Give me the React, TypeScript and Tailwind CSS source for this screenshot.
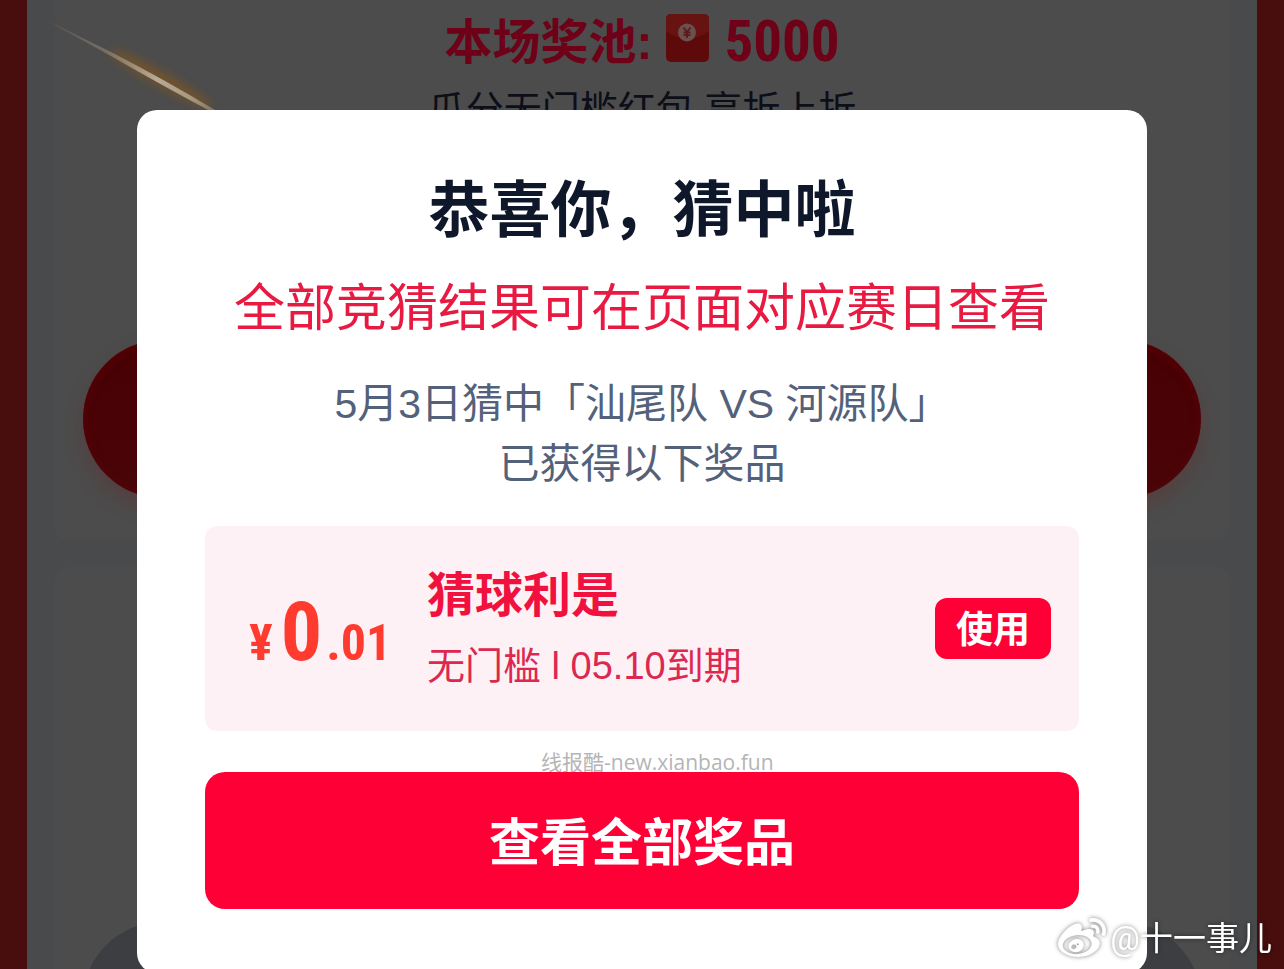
import { FaWeibo } from "react-icons/fa";

function RedEnvelope() {
  return (
    <svg viewBox="0 0 44 48" className="h-12 w-11" aria-hidden="true">
      <defs>
        <linearGradient id="body" x1="0" y1="0" x2="0" y2="1">
          <stop offset="0" stopColor="#5a0a0b" />
          <stop offset="1" stopColor="#600a0a" />
        </linearGradient>
        <clipPath id="shape">
          <rect x="0" y="0" width="43" height="48" rx="5" />
        </clipPath>
      </defs>
      <g clipPath="url(#shape)">
        <rect width="43" height="48" fill="url(#body)" />
        <path d="M0 0H43V17Q21.500 32 0 17Z" fill="#671312" />
      </g>
      <circle cx="21" cy="18.500" r="9" fill="#6b504e" />
      <path
        d="M17.500 13.500L21 18L24.500 13.500M21 18V24M17.500 18.500H24.500M17.500 21.200H24.500"
        fill="none"
        stroke="#5c1a18"
        strokeWidth="1.800"
      />
    </svg>
  );
}

function LightStreak() {
  return (
    <svg viewBox="0 0 200 112" className="absolute top-0 -left-3 h-28 w-[200px]" aria-hidden="true">
      <defs>
        <linearGradient id="ray" gradientUnits="userSpaceOnUse" x1="0" y1="18" x2="175" y2="112">
          <stop offset="0" stopColor="#a08f7c" stopOpacity="0.1" />
          <stop offset="0.35" stopColor="#a08f7c" stopOpacity="0.5" />
          <stop offset="0.65" stopColor="#b8aa98" />
          <stop offset="0.85" stopColor="#a8977f" />
          <stop offset="1" stopColor="#80705c" />
        </linearGradient>
        <filter id="soft" x="-50%" y="-200%" width="200%" height="500%">
          <feGaussianBlur stdDeviation="5" />
        </filter>
      </defs>
      <ellipse cx="118" cy="79" rx="58" ry="7" fill="#7d5420" opacity="0.8" filter="url(#soft)" transform="rotate(29 118 79)" />
      <path d="M0 18.500L70 53Q124 81 172 110L169 112Q120 86 68 56Z" fill="url(#ray)" />
    </svg>
  );
}

export default function App() {
  return (
    <div className="relative h-screen overflow-hidden bg-[#470e0d] px-[27px] font-['Liberation_Sans','Noto_Sans_CJK_SC',sans-serif]">
      <main className="flex h-full flex-col gap-[27px] bg-[#484a4b] px-7">
        <section className="relative flex h-[540px] shrink-0 flex-col items-center rounded-b-xl bg-[#4c4c4c] px-7 pt-[14px] pb-[42px]">
          <LightStreak />
          <h2 className="flex items-start gap-[14px] text-5xl leading-[58px] font-bold text-[#6e0018]">
            <span>本场奖池:</span>
            <RedEnvelope />
            <span className="font-['Roboto_Condensed','Roboto'] text-[57px] leading-[56px]">5000</span>
          </h2>
          <p className="mt-[10px] text-[38px] leading-[56px] text-[#0c0e18]">瓜分无门槛红包 享折上折</p>
          <button
            type="button"
            aria-label="竞猜"
            className="mt-auto h-[158px] w-full rounded-full bg-linear-to-b from-[#480003] to-[#4a0509] shadow-[0_10px_20px_rgba(110,30,30,0.3),inset_0_2px_10px_rgba(110,0,10,0.5)]"
          />
        </section>
        <section className="flex h-[540px] shrink-0 flex-col rounded-xl bg-[#4c4c4c] px-7 pt-[355px]">
          <button type="button" aria-label="已结束" className="h-[158px] w-full rounded-full bg-[#3d3e42]" />
        </section>
      </main>

      <div className="absolute inset-0 px-[137px] pt-[110px]">
        <div role="dialog" aria-labelledby="dialog-title" className="relative flex flex-col rounded-[20px] bg-white px-[68px] pt-[59px] pb-16 text-center">
          <h1 id="dialog-title" className="text-[61px] leading-[84px] font-bold text-[#0f172a]">恭喜你，猜中啦</h1>
          <p className="mt-4 text-[51px] leading-[80px] text-[#e81a41]">全部竞猜结果可在页面对应赛日查看</p>
          <p className="mt-[25px] text-[41px] leading-[60px] text-[#53617a]">
            5月3日猜中「汕尾队 VS 河源队」
            <br />
            已获得以下奖品
          </p>
          <article className="mt-8 flex h-[205px] items-center rounded-xl bg-[#fef1f5] pr-7 pl-11 text-left">
            <p className="flex w-[178px] shrink-0 items-baseline pt-2 font-['Roboto_Condensed','Roboto'] font-bold text-[#ff3b30]">
              <span className="mr-2 text-[50px]">¥</span>
              <span className="mr-1 text-[82px]">0</span>
              <span className="text-[50px]">.01</span>
            </p>
            <div className="flex-1 pt-1 text-[#dc2850]">
              <h3 className="text-5xl leading-[70px] font-bold text-[#f0113f]">猜球利是</h3>
              <p className="text-[38px] leading-[70px]">无门槛 l 05.10到期</p>
            </div>
            <button type="button" className="rounded-xl bg-[#ff0036] px-[21px] pt-1 text-[37px] leading-[57px] font-bold text-white">使用</button>
          </article>
          <div className="relative mt-[41px]">
            <p className="absolute -top-[26px] left-[336px] text-[21px] leading-8 whitespace-nowrap text-[#b5b5b5] font-['Open_Sans','Noto_Sans_CJK_SC',sans-serif]">线报酷-new.xianbao.fun</p>
            <button type="button" className="relative block w-full rounded-[20px] bg-[#ff0036] pt-[6px] text-[51px] leading-[131px] font-bold text-white">查看全部奖品</button>
          </div>
        </div>
      </div>

      <div className="absolute right-3 bottom-1 flex items-center gap-1 text-[33px] leading-[52px] text-white drop-shadow-[0_0_2px_rgba(0,0,0,0.5)]">
        <FaWeibo className="size-12" aria-hidden="true" />
        <span className="font-['Roboto','Noto_Sans_CJK_SC',sans-serif]">@十一事儿</span>
      </div>
    </div>
  );
}
